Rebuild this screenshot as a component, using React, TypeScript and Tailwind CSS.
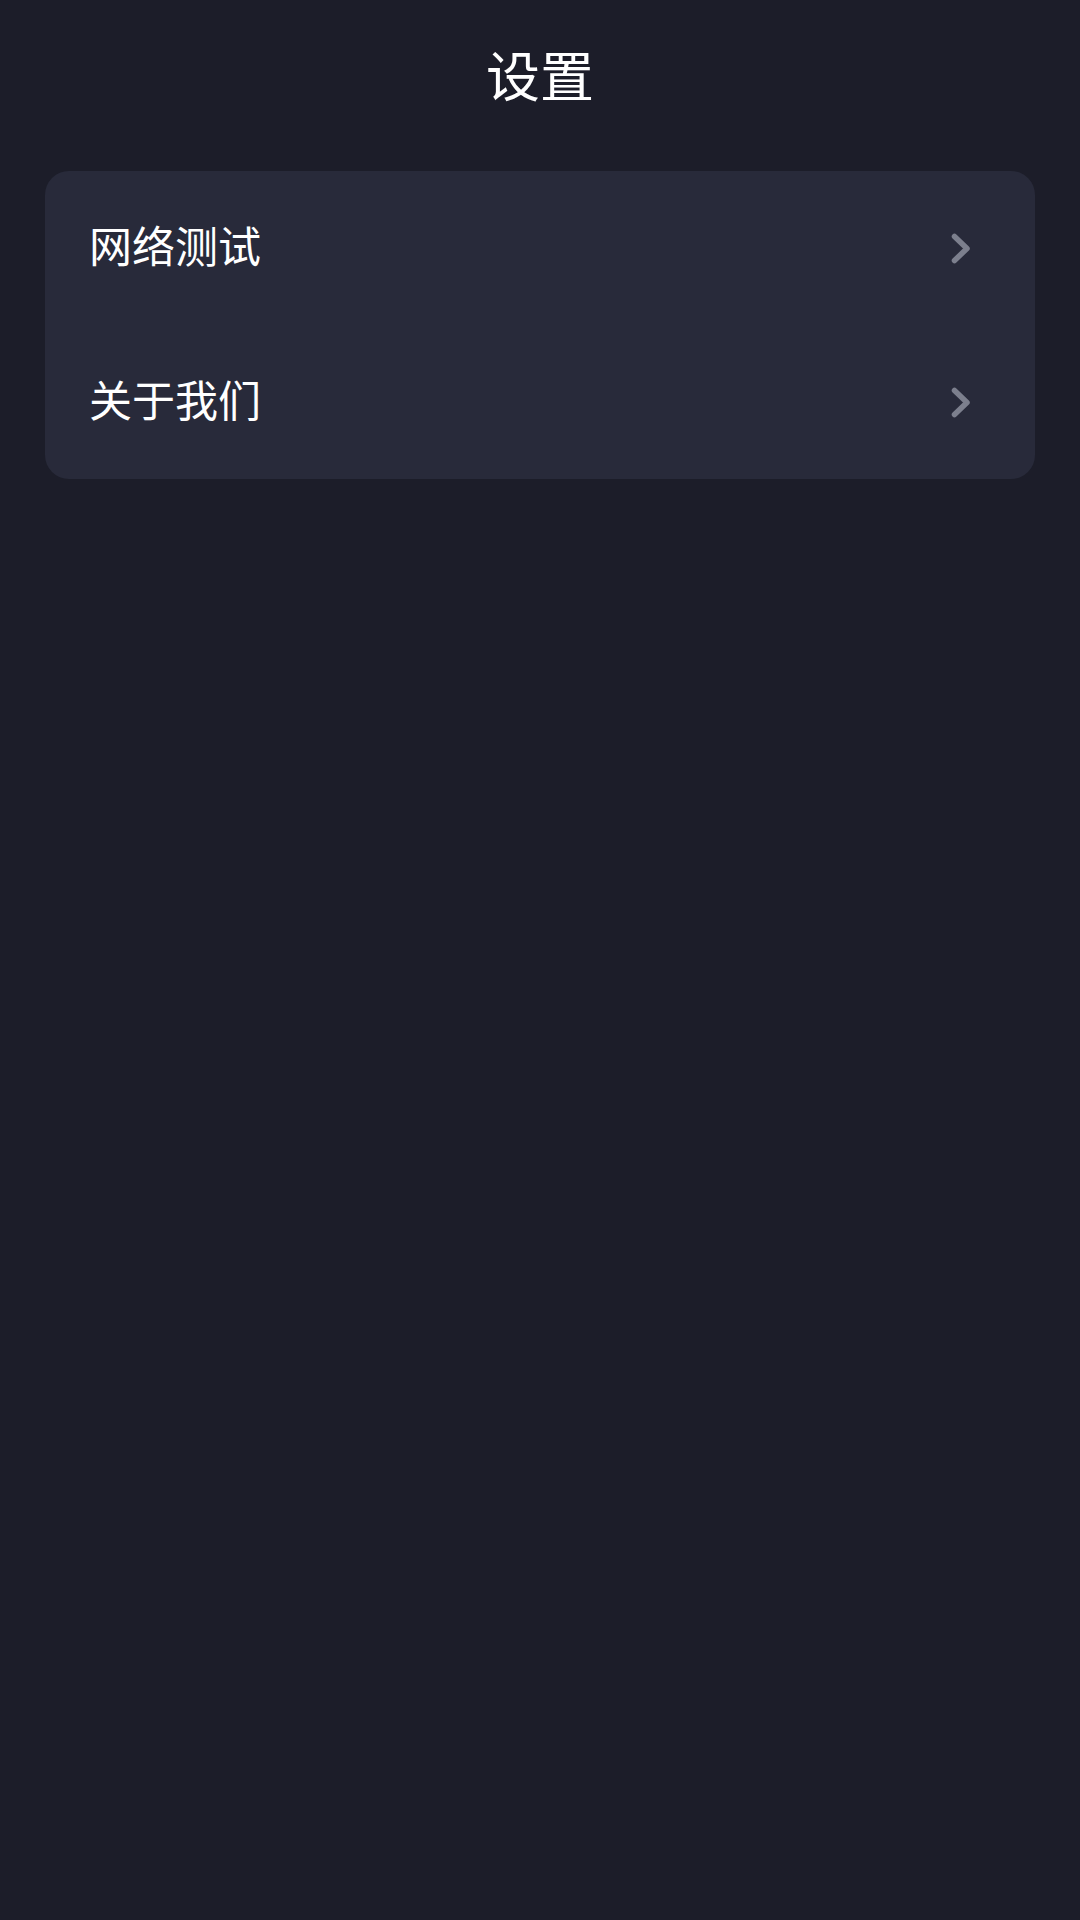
import React from "react";

function Chevron() {
  return (
    <svg width="20" height="31" viewBox="0 0 20 31" fill="none">
      <polyline
        points="3.5,3.5 16,15.5 3.5,27.5"
        stroke="#7c7f8d"
        strokeWidth="5.5"
        strokeLinecap="round"
        strokeLinejoin="round"
      />
    </svg>
  );
}

function Row({ label }: { label: string }) {
  return (
    <div className="flex h-[154px] items-center justify-between pl-[44px] pr-[64px]">
      <span className="mb-[8px] text-[43px] leading-none text-white">{label}</span>
      <Chevron />
    </div>
  );
}

export default function App() {
  return (
    <div
      className="min-h-[1920px] w-[1080px] bg-[#1c1d29]"
      style={{ fontFamily: '"Noto Sans CJK SC", "Noto Sans", sans-serif' }}
    >
      <div className="flex h-[148px] items-center justify-center">
        <h1 className="text-[54px] leading-none font-normal text-white">设置</h1>
      </div>
      <div className="mt-[23px] px-[45px]">
        <div className="flex flex-col rounded-[24px] bg-[#282a3a]">
          <Row label="网络测试" />
          <Row label="关于我们" />
        </div>
      </div>
    </div>
  );
}
